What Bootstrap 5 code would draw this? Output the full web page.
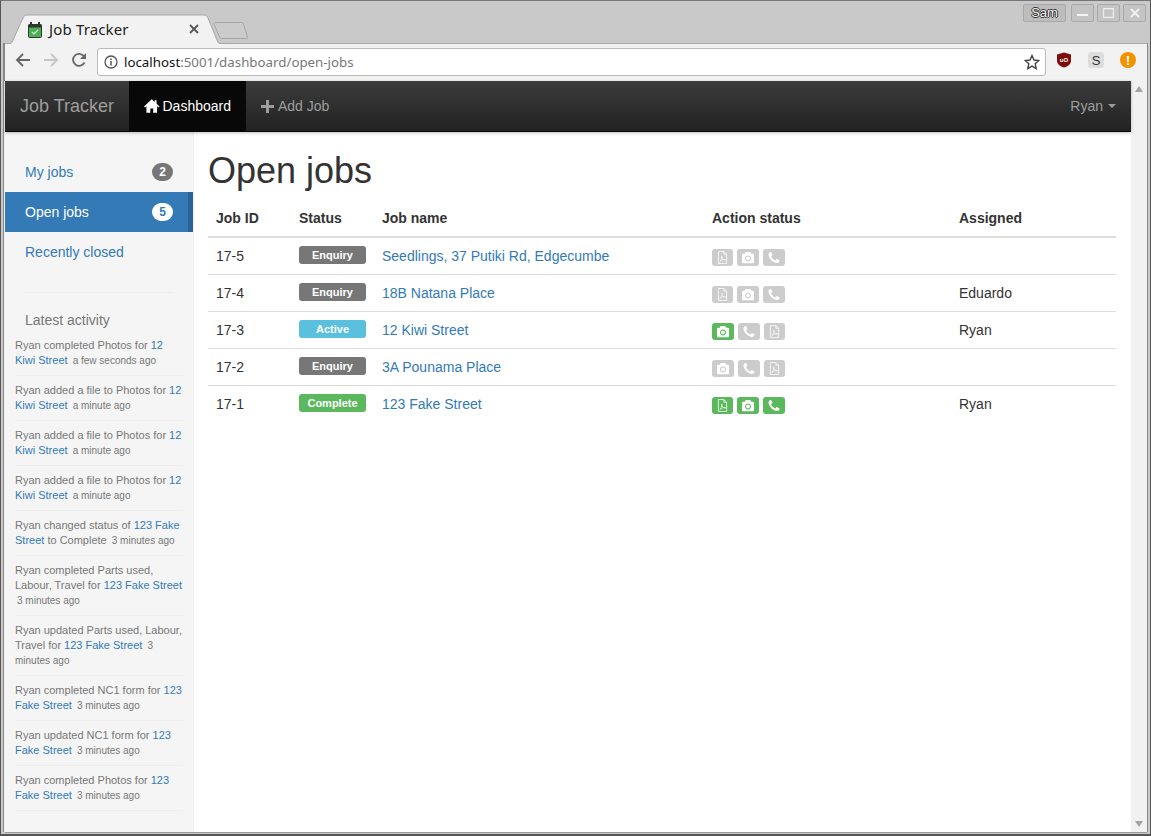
<!DOCTYPE html>
<html lang="en">
<head>
<meta charset="UTF-8" />
<title>Job Tracker</title>
<link href="https://cdn.jsdelivr.net/npm/bootstrap@5.3.0/dist/css/bootstrap.min.css" rel="stylesheet" />
<style>
  html, body { height: 100%; overflow: hidden; }
  body { margin: 0; background: #c9c9c9; font: 14px/20px "Liberation Sans", Arial, sans-serif; color: #333; }
  a { text-decoration: none; color: #337ab7; }
  svg { display: block; }

  .win { height: 836px; width: 1151px; border: 1px solid #555; border-top-color: #777; border-bottom-width: 2px; background: #c9c9c9; }
  .titlebar { height: 42px; position: relative; }
  .tab-shape { position: absolute; left: 4px; top: 13px; }
  .tab-title { position: absolute; left: 48px; top: 18px; font: 15px/20px "Noto Sans", sans-serif; letter-spacing: .15px; color: #222; }
  .tab-fav { position: absolute; left: 27px; top: 21px; }
  .tab-close { position: absolute; left: 188px; top: 23px; }
  .win-btns { position: absolute; right: 4px; top: 3px; gap: 3px; }
  .win-btn { height: 18px; width: 23px; border: 1px solid #a9a9a9; border-radius: 2px; background: #c4c4c4; display: flex; align-items: center; justify-content: center; }
  .win-btn-sam { width: 43px; margin-right: 2px; font: 13px/14px "Liberation Sans", sans-serif; background: #bdbdbd; color: #f4f4f4; text-shadow: 1px 0 0 #333, -1px 0 0 #333, 0 1px 0 #333, 0 -1px 0 #333; }

  .toolbar { height: 38px; margin: 0 3px 0 4px; background: #f2f2f2; border-top: 1px solid #aaa; box-shadow: -2px 0 0 #888, 1px 0 0 #888; padding: 4px 0 0 10px; gap: 12px; }
  .urlbar { width: 949px; height: 28px; margin: 0 -2px; background: #fff; border: 1px solid #bbb; border-radius: 3px; padding: 0 5px 0 6px; font: 13.300px/26px "Noto Sans", sans-serif; color: #777; }
  .urlbar b { font-weight: 400; color: #111; }
  .url-info { margin-right: 6px; }
  .ext-icons { gap: 16px; }

  .page { height: 751px; margin: 0 3px 0 4px; box-shadow: -1px 0 0 #f2f2f2, -2px 0 0 #888, 1px 0 0 #888, 0 1px 0 #999; }
  .content-col { width: 1126px; }
  .scroll-col { width: 16px; background: #f1f1f1; padding: 5px 0; }
  .scroll-arrow-up { width: 0; height: 0; margin: 0 auto; border: 4px solid transparent; border-top: 0; border-bottom: 6px solid #a3a3a3; }
  .scroll-arrow-down { width: 0; height: 0; margin: 0 auto; border: 4px solid transparent; border-bottom: 0; border-top: 6px solid #a3a3a3; }

  .app-nav { height: 51px; padding: 0; background: linear-gradient(#3c3c3c, #222); border-bottom: 1px solid #080808; box-shadow: 0 1px 3px rgba(0,0,0,.25); }
  .app-brand { font-size: 18px; line-height: 20px; color: #9d9d9d; padding: 15px; width: 124px; white-space: nowrap; }
  .app-link { display: flex; align-items: center; gap: 3px; height: 50px; padding: 0 15px; color: #9d9d9d; }
  .app-link.current { background: #080808; color: #fff; width: 117px; }
  .app-plus { margin-right: 1px; }
  .app-caret { display: inline-block; border-top: 4px solid; border-left: 4px solid transparent; border-right: 4px solid transparent; margin-left: 2px; }

  .body-row { height: 700px; background: #fff; }
  .side { width: 189px; flex: none; background: #f5f5f5; border-right: 1px solid #eee; padding-top: 20px; }
  .side-link { display: flex; align-items: center; justify-content: space-between; height: 40px; padding: 0 20px; }
  .side-link.current { background: #337ab7; color: #fff; border-right: 5px solid #2a6496; padding-right: 15px; }
  .side-count { min-width: 21px; height: 18px; border-radius: 10px; background: #777; color: #fff; font-size: 12px; font-weight: 700; line-height: 18px; text-align: center; }
  .side-link.current .side-count { background: #fff; color: #337ab7; }
  .side-rule { margin: 20px 20px 17px; border-top: 1px solid #eee; opacity: 1; }
  .side-head { padding: 0 20px; color: #777; margin-bottom: 1px; }
  .feed { margin: 0 10px; font-size: 11px; line-height: 15px; color: #777; }
  .feed-item { padding: 7px 0; border-bottom: 1px solid #eee; }
  .feed-item small { font-size: 10px; margin-left: 2px; }

  .main-col { flex: 1; padding: 0 15px 0 14px; }
  .main-title { font-size: 36px; line-height: 40px; font-weight: 500; color: #333; margin: 19px 0 9px; }
  .jobs-table { table-layout: fixed; margin: 0; font-size: 14px; line-height: 20px; color: #333; }
  .jobs-table th { padding: 8px; font-weight: 700; color: #333; border-bottom: 2px solid #ddd; }
  .jobs-table td { padding: 8px; color: #333; border-bottom: 1px solid #ddd; vertical-align: top; }
  .jobs-table tr:last-child td { border-bottom: 0; }
  .w-id, .w-status { width: 83px; }
  .w-name { width: 330px; }
  .w-action { width: 247px; }
  .state { display: block; width: 67px; height: 18px; border-radius: 3px; color: #fff; font-size: 11px; font-weight: 700; line-height: 18px; text-align: center; }
  .state-enquiry { background: #777; }
  .state-active { background: #5bc0de; }
  .state-complete { background: #5cb85c; }
  .acts { gap: 4px; margin-top: 3px; }
  .act { height: 17px; width: 22px; border-radius: 3px; background: #ccc; display: flex; align-items: center; justify-content: center; color: #fff; }
  .act-pdf { width: 21px; }
  .act.on { background: #5cb85c; }
</style>
</head>
<body>
<svg width="0" height="0" class="position-absolute">
  <symbol id="i-camera" viewBox="0 0 1792 1792"><path fill="currentColor" d="M896 672q119 0 203.500 84.500t84.500 203.500-84.500 203.500-203.500 84.500-203.500-84.500-84.500-203.500 84.500-203.500 203.500-84.500zm704-416q106 0 181 75t75 181v896q0 106-75 181t-181 75h-1408q-106 0-181-75t-75-181v-896q0-106 75-181t181-75h224l51-136q19-49 69.500-84.500t103.500-35.500h512q53 0 103.500 35.500t69.500 84.500l51 136h224zm-704 1152q185 0 316.500-131.500t131.500-316.500-131.500-316.500-316.500-131.500-316.500 131.500-131.500 316.500 131.500 316.500 316.500 131.500z"/></symbol>
  <symbol id="i-phone" viewBox="0 0 1792 1792"><path fill="currentColor" d="M1600 1240q0 27-10 70.500t-21 68.500q-21 50-122 106-94 51-186 51-27 0-53-3.500t-57.500-12.500-47-14.500-55.500-20.500-49-18q-98-35-175-83-127-79-264-216t-216-264q-48-77-83-175-3-9-18-49t-20.500-55.500-14.500-47-12.500-57.500-3.500-53q0-92 51-186 56-101 106-122 25-11 68.500-21t70.500-10q14 0 21 3 18 6 53 76 11 19 30 54t35 63.500 31 53.500q3 4 17.500 25t21.500 35.500 7 28.500q0 20-28.500 50t-62 55-62 53-28.500 46q0 9 5 22.500t8.500 20.500 14 24 11.500 19q76 137 174 235t235 174q2 1 19 11.500t24 14 20.500 8.500 22.500 5q18 0 46-28.500t53-62 55-62 50-28.500q14 0 28.500 7t35.500 21.500 25 17.500q25 15 53.500 31t63.500 35 54 30q70 35 76 53 3 7 3 21z"/></symbol>
  <symbol id="i-pdf" viewBox="0 0 12 14"><path fill="none" stroke="currentColor" stroke-width="1" opacity=".85" d="M1.500.5h6l3 3v10h-9zM7.500.5v3h3"/><path fill="none" stroke="currentColor" stroke-width=".8" opacity=".85" d="M3 11.500c1.500-1 2.500-3.500 2.600-5.500.1-1-.8-1-.7 0 .2 2 2 3.600 4 3.900.9.100.9-.7 0-.7-2-.1-4.500.7-5.900 2.300z"/></symbol>
</svg>

<div class="win">
  <div class="titlebar">
    <svg class="tab-shape" width="246" height="30" viewBox="0 0 246 30">
      <path d="M0 30h3c3 0 4-1 5-4l10-22c1-2 2-3 4-3h177c2 0 3 1 4 3l9 22c1 3 2 4 5 4h8" fill="#f2f2f2" stroke="#a6a6a6"/>
      <path d="M209 10c0-1 .5-1.500 1.500-1.500h26c1 0 1.500.5 2 1.500l4 13c.2 1 0 1.500-1 1.500h-25c-1 0-1.500-.5-2-1.500z" fill="#cbcbcb" stroke="#a6a6a6"/>
    </svg>
    <svg class="tab-fav" width="14" height="16" viewBox="0 0 14 16">
      <rect x=".5" y="2.500" width="13" height="13" rx="1" fill="#4caf50" stroke="#333"/>
      <rect x=".5" y="2.500" width="13" height="3" fill="#333"/>
      <path d="M3 0v4M11 0v4" stroke="#333" stroke-width="2"/>
      <path d="M4 10l2 2 4-4" fill="none" stroke="#d8f5d8" stroke-width="1.200"/>
    </svg>
    <div class="tab-title">Job Tracker</div>
    <svg class="tab-close" width="10" height="10" viewBox="0 0 10 10"><path d="M1 1l8 8M9 1l-8 8" stroke="#555" stroke-width="1.800"/></svg>
    <div class="win-btns d-flex">
      <div class="win-btn win-btn-sam">Sam</div>
      <div class="win-btn"><svg width="11" height="5"><rect width="11" height="2" y="3" fill="#f2f2f2"/></svg></div>
      <div class="win-btn"><svg width="11" height="10"><rect x=".5" y=".5" width="10" height="9" rx="1" fill="none" stroke="#eee" stroke-width="1.400"/></svg></div>
      <div class="win-btn"><svg width="10" height="10"><path d="M1 1l8 8M9 1l-8 8" stroke="#f2f2f2" stroke-width="1.800"/></svg></div>
    </div>
  </div>

  <div class="toolbar d-flex align-items-start">
    <svg class="mt-1" width="16" height="16" viewBox="0 0 16 16"><path d="M15 8H2M8 2L2 8l6 6" fill="none" stroke="#666" stroke-width="1.800"/></svg>
    <svg class="mt-1" width="16" height="16" viewBox="0 0 16 16"><path d="M1 8h13M8 2l6 6-6 6" fill="none" stroke="#c6c6c6" stroke-width="1.800"/></svg>
    <svg class="mt-1" width="16" height="16" viewBox="0 0 16 16"><path d="M13.500 10.500A6 6 0 1 1 13 4.500" fill="none" stroke="#666" stroke-width="1.800"/><path d="M15 1v6H9z" fill="#666"/></svg>
    <div class="urlbar d-flex align-items-center">
      <svg class="url-info" width="14" height="14" viewBox="0 0 14 14"><circle cx="7" cy="7" r="6" fill="none" stroke="#555" stroke-width="1.300"/><path d="M7 6v4.500M7 3.500v1.500" stroke="#555" stroke-width="1.500"/></svg>
      <span class="flex-grow-1"><b>localhost</b>:5001/dashboard/open-jobs</span>
      <svg width="16" height="16" viewBox="0 0 16 16"><path d="M8 1.500l2 4.500 4.800.5-3.600 3.200 1 4.800L8 12.100l-4.200 2.400 1-4.800L1.200 6.500 6 6z" fill="none" stroke="#444" stroke-width="1.400"/></svg>
    </div>
    <div class="ext-icons d-flex align-items-center">
      <svg class="mt-1" width="16" height="16" viewBox="0 0 16 16"><path d="M8 .5l7 2v6c0 3.500-3 6-7 7-4-1-7-3.500-7-7v-6z" fill="#7d0d0d"/><text x="8" y="10" text-anchor="middle" font-size="6" font-weight="700" font-family="Liberation Sans" fill="#fff">uO</text></svg>
      <svg class="mt-1" width="16" height="16" viewBox="0 0 16 16"><rect width="16" height="16" rx="3" fill="#ddd"/><text x="8" y="13" text-anchor="middle" font-size="13" font-family="Liberation Sans" fill="#333">S</text></svg>
      <svg class="mt-1" width="16" height="16" viewBox="0 0 16 16"><circle cx="8" cy="8" r="8" fill="#f09300"/><text x="8" y="12.500" text-anchor="middle" font-size="12" font-weight="700" font-family="Liberation Sans" fill="#fff">!</text></svg>
    </div>
  </div>

  <div class="page d-flex">
    <div class="content-col">
      <nav class="navbar app-nav flex-nowrap justify-content-start">
        <a class="app-brand" href="#">Job Tracker</a>
        <a class="app-link current" href="#">
          <svg width="16" height="14" viewBox="0 0 16 14"><path fill="currentColor" d="M8 0L0 7.500l1 1 1.500-1.300V14h4v-4.500h3V14h4V7.200L15 8.500l1-1-3-2.800V1h-2v1.800z"/></svg>
          Dashboard</a>
        <a class="app-link" href="#">
          <svg class="app-plus" width="13" height="13" viewBox="0 0 13 13"><path fill="currentColor" d="M5 0h3v5h5v3H8v5H5V8H0V5h5z"/></svg>
          Add Job</a>
        <a class="app-link ms-auto" href="#">Ryan <span class="app-caret"></span></a>
      </nav>

      <div class="body-row d-flex">
        <aside class="side">
          <a class="side-link" href="#">My jobs <span class="side-count">2</span></a>
          <a class="side-link current" href="#">Open jobs <span class="side-count">5</span></a>
          <a class="side-link" href="#">Recently closed</a>
          <hr class="side-rule" />
          <div class="side-head">Latest activity</div>
          <div class="feed">
            <div class="feed-item">Ryan completed Photos for <a href="#">12 Kiwi Street</a> <small>a few seconds ago</small></div>
            <div class="feed-item">Ryan added a file to Photos for <a href="#">12 Kiwi Street</a> <small>a minute ago</small></div>
            <div class="feed-item">Ryan added a file to Photos for <a href="#">12 Kiwi Street</a> <small>a minute ago</small></div>
            <div class="feed-item">Ryan added a file to Photos for <a href="#">12 Kiwi Street</a> <small>a minute ago</small></div>
            <div class="feed-item">Ryan changed status of <a href="#">123 Fake Street</a> to Complete <small>3 minutes ago</small></div>
            <div class="feed-item">Ryan completed Parts used, Labour, Travel for <a href="#">123 Fake Street</a> <small>3 minutes ago</small></div>
            <div class="feed-item">Ryan updated Parts used, Labour, Travel for <a href="#">123 Fake Street</a> <small>3 minutes ago</small></div>
            <div class="feed-item">Ryan completed NC1 form for <a href="#">123 Fake Street</a> <small>3 minutes ago</small></div>
            <div class="feed-item">Ryan updated NC1 form for <a href="#">123 Fake Street</a> <small>3 minutes ago</small></div>
            <div class="feed-item">Ryan completed Photos for <a href="#">123 Fake Street</a> <small>3 minutes ago</small></div>
          </div>
        </aside>

        <main class="main-col">
          <h1 class="main-title">Open jobs</h1>
          <table class="table jobs-table">
            <colgroup><col class="w-id" /><col class="w-status" /><col class="w-name" /><col class="w-action" /><col /></colgroup>
            <thead>
              <tr><th>Job ID</th><th>Status</th><th>Job name</th><th>Action status</th><th>Assigned</th></tr>
            </thead>
            <tbody id="job-rows"></tbody>
          </table>
        </main>
      </div>
    </div>
    <div class="scroll-col d-flex flex-column justify-content-between">
      <div class="scroll-arrow-up"></div>
      <div class="scroll-arrow-down"></div>
    </div>
  </div>
</div>

<script>
  const jobs = [
    { id: "17-5", status: "Enquiry", name: "Seedlings, 37 Putiki Rd, Edgecumbe", acts: ["pdf", "camera", "phone"], on: false, who: "" },
    { id: "17-4", status: "Enquiry", name: "18B Natana Place", acts: ["pdf", "camera", "phone"], on: false, who: "Eduardo" },
    { id: "17-3", status: "Active", name: "12 Kiwi Street", acts: ["camera", "phone", "pdf"], on: ["camera"], who: "Ryan" },
    { id: "17-2", status: "Enquiry", name: "3A Pounama Place", acts: ["camera", "phone", "pdf"], on: false, who: "" },
    { id: "17-1", status: "Complete", name: "123 Fake Street", acts: ["pdf", "camera", "phone"], on: ["pdf", "camera", "phone"], who: "Ryan" },
  ];
  const size = { pdf: 'width="11" height="13"', camera: 'width="12" height="12"', phone: 'width="14" height="14"' };
  document.getElementById("job-rows").innerHTML = jobs.map((j) => `<tr>
    <td>${j.id}</td>
    <td><span class="state state-${j.status.toLowerCase()}">${j.status}</span></td>
    <td><a href="#">${j.name}</a></td>
    <td><div class="acts d-flex">${j.acts.map((a) => `<span class="act act-${a} ${j.on && j.on.includes(a) ? "on" : ""}"><svg ${size[a]}><use href="#i-${a}"/></svg></span>`).join("")}</div></td>
    <td>${j.who}</td>
  </tr>`).join("");
</script>
<script src="https://cdn.jsdelivr.net/npm/bootstrap@5.3.0/dist/js/bootstrap.bundle.min.js"></script>
</body>
</html>
